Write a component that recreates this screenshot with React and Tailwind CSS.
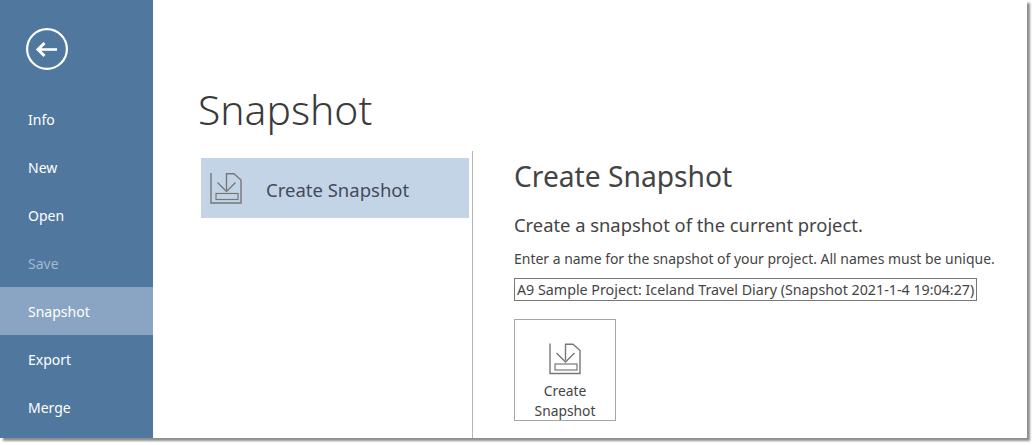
const FONT = "font-['Noto_Sans',sans-serif]"

const navItems = [
  { label: 'Info' },
  { label: 'New' },
  { label: 'Open' },
  { label: 'Save', disabled: true },
  { label: 'Snapshot', active: true },
  { label: 'Export' },
  { label: 'Merge' },
]

function SnapshotIcon({ className }) {
  return (
    <svg className={className} viewBox="0 0 32 31" fill="none" stroke="#77777a" strokeWidth="1.4">
      <path d="M1 0V30H31V7L24 0.7H16" />
      <path d="M16.5 0.5V17" />
      <path d="M7.5 9.5L16.5 18.5L25.5 9.5" />
      <rect x="6" y="20.5" width="22" height="6" strokeWidth="1.2" />
    </svg>
  )
}

function BackIcon() {
  return (
    <svg className="w-[42px] h-[42px]" viewBox="0 0 42 42" fill="none" stroke="white">
      <circle cx="21" cy="21" r="19.9" strokeWidth="2.2" />
      <path d="M31 21.5H13" strokeWidth="2.6" />
      <path d="M18.5 15L12 21.5L18.5 28" strokeWidth="3" />
    </svg>
  )
}

function Sidebar() {
  return (
    <aside className="w-[153px] shrink-0 bg-[#50789f] flex flex-col">
      <div className="h-[95px] pl-[26px] pt-[28px]">
        <BackIcon />
      </div>
      {navItems.map((item) => (
        <div
          key={item.label}
          className={`h-[48px] flex items-center pl-[28px] text-[14px] ${
            item.active ? 'bg-[#8aa5c3] text-white' : item.disabled ? 'text-[#a3b8ce]' : 'text-white'
          }`}
        >
          {item.label}
        </div>
      ))}
    </aside>
  )
}

export default function App() {
  return (
    <div className={`w-[1034px] h-[445px] bg-white overflow-hidden ${FONT}`}>
      <div className="w-[1027px] h-[438px] flex bg-white shadow-[3px_3px_2px_#8f8f8f] overflow-hidden">
        <Sidebar />
        <main className="flex-1 flex flex-col min-w-0">
          <h1 className="h-[151px] pl-[45px] pt-[82px] text-[40.8px] leading-[54px] font-light text-[#3a3a3a]">Snapshot</h1>
          <div className="flex-1 flex min-h-0">
            <div className="w-[320px] shrink-0 pl-[48px] pr-[3px] pt-[7px] border-r border-[#b5b5b5]">
              <div className="h-[60px] bg-[#c3d4e7] flex items-center pl-[9px] gap-[24px]">
                <SnapshotIcon className="w-[32px] h-[31px] shrink-0" />
                <span className="text-[18.5px] leading-[26px] pt-[3px] text-[#444a5c]">Create Snapshot</span>
              </div>
            </div>
            <div className="flex-1 pl-[41px] flex flex-col items-start text-[#444444]">
              <h2 className="mt-[8px] text-[28.2px] leading-[34px]">Create Snapshot</h2>
              <p className="mt-[19px] text-[18.35px] leading-[26px]">Create a snapshot of the current project.</p>
              <p className="mt-[12px] text-[13.96px] leading-[18px] whitespace-nowrap">
                Enter a name for the snapshot of your project. All names must be unique.
              </p>
              <div className="mt-[10px] w-[463px] h-[23px] border border-[#777777] pl-[2px] flex items-center text-[14.28px] whitespace-nowrap overflow-hidden">
                A9 Sample Project: Iceland Travel Diary (Snapshot 2021-1-4 19:04:27)
              </div>
              <button className="mt-[18px] w-[102px] h-[102px] border border-[#a6a6a6] flex flex-col items-center pt-[23px] text-[13.8px] leading-[20px] text-[#444444]">
                <SnapshotIcon className="w-[32px] h-[32px] shrink-0 mb-[6px]" />
                <span>Create</span>
                <span>Snapshot</span>
              </button>
            </div>
          </div>
        </main>
      </div>
    </div>
  )
}
